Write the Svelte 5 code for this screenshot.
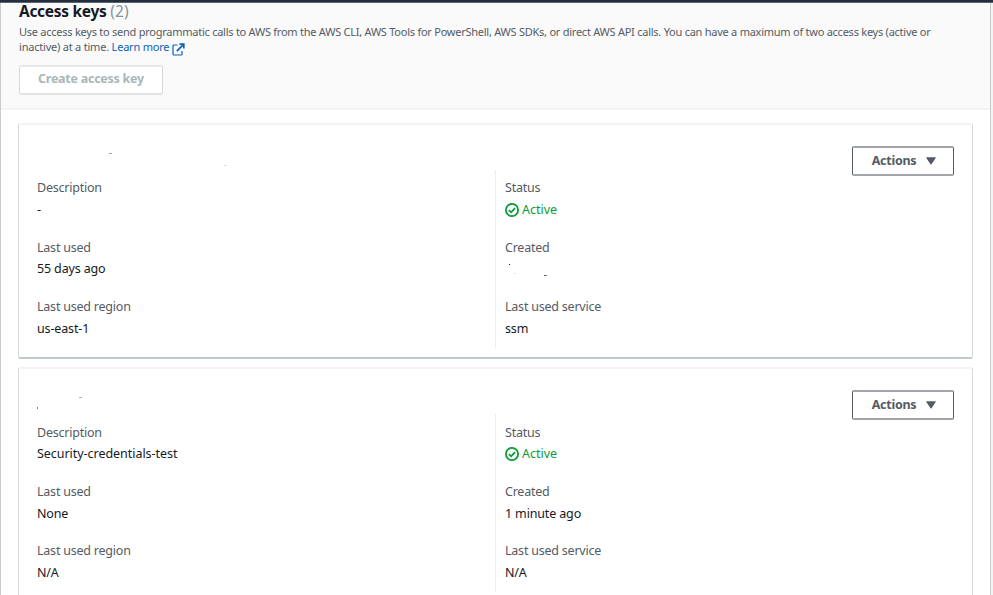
<script>
  const keys = [
    {
      id: 'first',
      specks: [
        { x: 90, y: 28, w: 3, h: 1, c: '#a3a7ad' },
        { x: 205, y: 40, w: 3, h: 1, c: '#dfe1e3' },
        { x: 490, y: 139, w: 1, h: 1, c: '#16191f' },
        { x: 495, y: 148, w: 2, h: 1, c: '#dfe1e3' },
        { x: 525, y: 150, w: 3, h: 1, c: '#6c7178' }
      ],
      fields: [
        ['Description', '-', 'Status', 'Active'],
        ['Last used', '55 days ago', 'Created', ''],
        ['Last used region', 'us-east-1', 'Last used service', 'ssm']
      ]
    },
    {
      id: 'second',
      specks: [
        { x: 60, y: 28, w: 3, h: 1, c: '#b0b4ba' },
        { x: 18, y: 38, w: 1, h: 2, c: '#a37a4c' }
      ],
      fields: [
        ['Description', 'Security-credentials-test', 'Status', 'Active'],
        ['Last used', 'None', 'Created', '1 minute ago'],
        ['Last used region', 'N/A', 'Last used service', 'N/A']
      ]
    }
  ];
</script>

<div class="page">
  <div class="topbar"></div>
  <main class="panel">
    <header class="head">
      <h2>Access keys <span>(2)</span></h2>
      <p>
        <span class="line">Use access keys to send programmatic calls to AWS from the AWS CLI, AWS Tools for PowerShell, AWS SDKs, or direct AWS API calls. You can have a maximum of two access keys (active or</span>
        <span class="line second">inactive) at a time. <a href="#learn">Learn more<svg width="13" height="13" viewBox="0 0 13 13" fill="none" stroke="currentColor"><path stroke-width="1.2" d="M5.5 2H2Q1 2 1 3V11Q1 12 2 12H9Q10 12 10 11V8" /><path stroke-width="1.7" d="M4.8 8.2L11.3 1.6M7.5 1.2H11.8V5.5" /></svg></a></span>
      </p>
      <button class="create" disabled>Create access key</button>
    </header>
    <div class="list">
      {#each keys as key (key.id)}
        <section class="card">
          <div class="tools">
            <button class="actions">Actions <svg width="10" height="8" viewBox="0 0 10 8"><path d="M.7.3H9.3Q10.1.3 9.7 1L5.5 7.3Q5 7.9 4.5 7.3L.3 1Q-.1.3.7.3Z" fill="currentColor" /></svg></button>
          </div>
          {#each key.fields as [label, value, label2, value2]}
            <div class="row">
              <div class="cell">
                <div class="label">{label}</div>
                <div class="value" class:long={value.length > 20}>{value}</div>
              </div>
              <div class="cell right">
                <div class="label">{label2}</div>
                {#if label2 === 'Status'}
                  <div class="active"><svg width="14" height="14" viewBox="0 0 14 14" fill="none" stroke="currentColor" stroke-width="1.8"><circle cx="7" cy="7" r="6.1" /><path d="M3.8 7.2L6.1 9.3L10.1 5.1" /></svg>{value2}</div>
                {:else}
                  <div class="value">{value2}</div>
                {/if}
              </div>
            </div>
          {/each}
          {#each key.specks as s}
            <i style="left:{s.x}px;top:{s.y}px;width:{s.w}px;height:{s.h}px;background:{s.c}"></i>
          {/each}
        </section>
      {/each}
    </div>
  </main>
</div>

<style>
  .page {
    box-sizing: border-box;
    width: 993px;
    height: 595px;
    overflow: hidden;
    background: #f2f3f3;
    color: #16191f;
    font-family: "Noto Sans", "Open Sans", sans-serif;
    font-size: 12.5px;
    letter-spacing: -0.22px;
  }
  .topbar {
    height: 3px;
    box-sizing: border-box;
    background: #232f3e;
    border-bottom: 1px solid #5b636e;
  }
  .panel {
    box-sizing: border-box;
    width: 991px;
    height: 640px;
    border: solid #c5cbcf;
    border-width: 0 1px;
    background: #fff;
  }
  .head {
    box-sizing: border-box;
    height: 107px;
    padding: 0 18px;
    background: #fafafa;
    border-bottom: 2px solid #f2f3f3;
  }
  h2 {
    margin: 0;
    height: 21px;
    line-height: 17px;
    font-size: 15.5px;
    letter-spacing: -0.3px;
  }
  h2 span {
    color: #879596;
    font-weight: 400;
    letter-spacing: 0.1px;
  }
  p {
    margin: 0;
    height: 41px;
    color: #545b64;
    font-size: 11px;
    line-height: 15px;
    letter-spacing: -0.25px;
    white-space: nowrap;
  }
  .line {
    display: block;
  }
  .second {
    letter-spacing: -0.21px;
  }
  a {
    color: #0a63b8;
    text-decoration: none;
  }
  a svg {
    margin-left: 3px;
    vertical-align: -5px;
  }
  button {
    display: flex;
    align-items: center;
    justify-content: center;
    box-sizing: border-box;
    height: 30px;
    padding: 0 0 2px;
    border-radius: 2px;
    background: #fff;
    font: 700 12.5px "Noto Sans", sans-serif;
    letter-spacing: -0.25px;
  }
  .create {
    width: 144px;
    border: 1px solid #d5dbdb;
    border-top: 2px solid #e6e9e9;
    border-bottom: 2px solid #e0e4e4;
    padding-bottom: 3px;
    color: #aab7b8;
  }
  .actions {
    width: 102px;
    border: solid #545b64;
    border-width: 2px 1px;
    border-top-color: #a1a5aa;
    border-bottom-color: #a1a5aa;
    padding: 0 0 1px 2px;
    color: #545b64;
  }
  .actions svg {
    margin-left: 10px;
  }
  .list {
    display: flex;
    flex-direction: column;
    gap: 8px;
    padding: 13px 17px;
  }
  .card {
    position: relative;
    box-sizing: border-box;
    flex: none;
    width: 955px;
    height: 236px;
    border: 1px solid #d5dbdb;
    border-top: 2px solid #f2f3f3;
    border-bottom: 2px solid #c2c8cb;
    border-radius: 2px;
  }
  .tools {
    display: flex;
    justify-content: flex-end;
    align-items: flex-start;
    box-sizing: border-box;
    height: 44.85px;
    padding: 21px 18px 0;
  }
  .card + .card .tools {
    height: 45.1px;
  }
  .row {
    display: flex;
    padding-left: 18px;
    line-height: 21.7px;
  }
  .cell {
    box-sizing: border-box;
    width: 458px;
    height: 59.3px;
    padding-top: 7.5px;
  }
  .right {
    padding-left: 9px;
    border-left: 1px solid #eaeded;
  }
  .label {
    color: #545b64;
  }
  .value {
    letter-spacing: -0.15px;
  }
  .long {
    letter-spacing: -0.04px;
  }
  .active {
    display: flex;
    align-items: center;
    gap: 3px;
    color: #0b9b38;
    letter-spacing: 0;
  }
  .card i {
    position: absolute;
  }
</style>
